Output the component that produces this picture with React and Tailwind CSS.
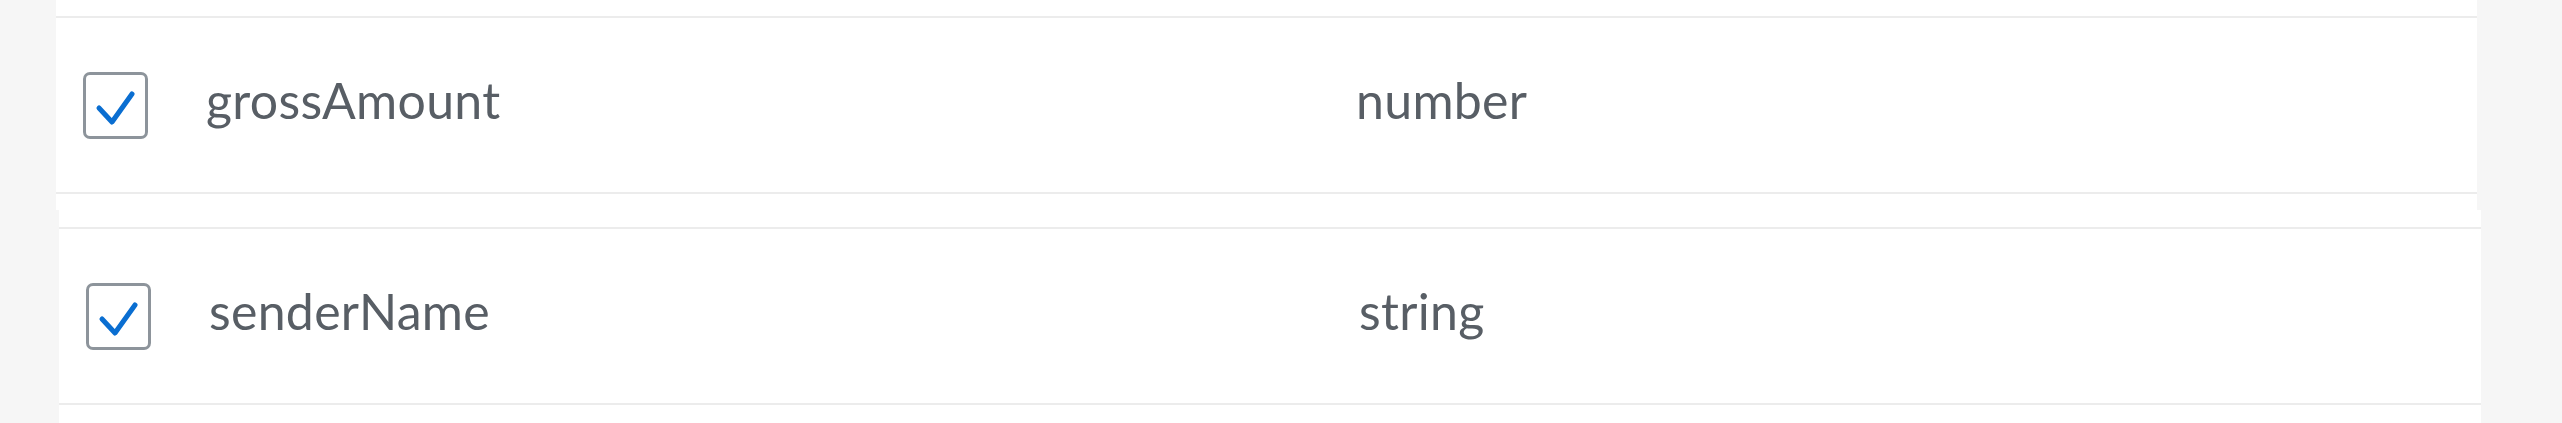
function CheckBox() {
  return (
    <div className="relative h-[67px] w-[65px] shrink-0 rounded-[7px] border-[3px] border-[#8d949b] bg-white">
      <svg
        width="65"
        height="67"
        viewBox="0 0 65 67"
        className="absolute -left-[3px] -top-[3px]"
      >
        <path
          d="M16 36 L29 50 L49 22"
          fill="none"
          stroke="#0a6ed1"
          strokeWidth="5"
          strokeLinecap="round"
          strokeLinejoin="round"
        />
      </svg>
    </div>
  );
}

function FieldRow({ name, type }) {
  return (
    <div className="flex h-[178px] items-center border-y-2 border-[#ececec] bg-white pl-[27px]">
      <CheckBox />
      <div className="mb-[10px] ml-[58px] w-[1150px] text-[50px] tracking-[0.3px] text-[#585e65]">{name}</div>
      <div className="mb-[10px] text-[50px] tracking-[0.3px] text-[#585e65]">{type}</div>
    </div>
  );
}

export default function App() {
  return (
    <div
      className="h-[423px] w-[2562px] overflow-hidden bg-[#f6f6f6]"
      style={{ fontFamily: "Lato, 'Open Sans', sans-serif" }}
    >
      <div className="ml-[56px] h-[210px] w-[2421px] bg-white pt-[16px]">
        <FieldRow name="grossAmount" type="number" />
      </div>
      <div className="ml-[59px] h-[213px] w-[2422px] bg-white pt-[17px]">
        <FieldRow name="senderName" type="string" />
      </div>
    </div>
  );
}
